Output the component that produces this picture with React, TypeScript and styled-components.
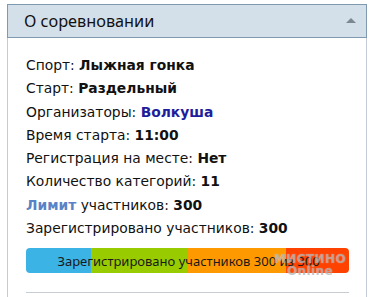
import React from "react";
import styled, { createGlobalStyle } from "styled-components";

const Global = createGlobalStyle`
  html, body { margin: 0; padding: 0; background: #ffffff; }
  body { font-family: "DejaVu Sans", Verdana, sans-serif; }
`;

const Panel = styled.section`
  margin: 4px 0 0 7px;
  width: 360px;
  box-sizing: border-box;
  border-left: 1px solid #c3ccd6;
  border-right: 1px solid #c3ccd6;
  height: 293px;
`;

const Header = styled.div`
  display: flex;
  align-items: center;
  justify-content: space-between;
  box-sizing: border-box;
  height: 34px;
  margin: 0 -1px;
  padding: 0 10px 0 16px;
  background: #d3e0ea;
  border: 1px solid #7f9ab0;
  font-family: "Noto Sans", "Open Sans", sans-serif;
  font-size: 16.3px;
  color: #111;
`;

const Arrow = styled.span`
  width: 0;
  height: 0;
  border-left: 5px solid transparent;
  border-right: 5px solid transparent;
  border-bottom: 5px solid #7d8790;
  margin-top: -1px;
`;

const Body = styled.div`
  padding: 16px 17px 0 18px;
  display: flex;
  flex-direction: column;
`;

const Row = styled.div`
  font-size: 13.85px;
  line-height: 23.3px;
  color: #111;
  white-space: nowrap;
`;

const Value = styled.b<{ $color?: string }>`
  font-weight: bold;
  color: ${(p) => p.$color || "#111"};
`;

const BarWrap = styled.div`
  position: relative;
  margin-top: 8px;
  height: 25px;
`;

const Track = styled.div`
  display: flex;
  height: 100%;
  border-radius: 4px;
  overflow: hidden;
`;

const Segment = styled.div<{ $bg: string }>`
  background: ${(p) => p.$bg};
  height: 100%;
`;

const BarLabel = styled.div`
  position: absolute;
  inset: 0;
  display: flex;
  align-items: center;
  justify-content: center;
  font-family: "Noto Sans", "Open Sans", sans-serif;
  font-size: 13px;
  color: #1a1a1a;
  padding-left: 2px;
`;

const Watermark = styled.div`
  position: absolute;
  right: 3px;
  top: 5px;
  font-family: "DejaVu Sans", sans-serif;
  font-weight: bold;
  font-size: 12px;
  line-height: 12px;
  color: rgba(150, 150, 150, 0.55);
  text-shadow: 0 0 1px rgba(255, 255, 255, 0.6);
  text-align: center;
  letter-spacing: 0.4px;
  pointer-events: none;
`;

const Divider = styled.hr`
  margin: 19px 0 0;
  border: none;
  border-top: 1px solid #c5ccd4;
`;

const segments = [
  { w: 65, bg: "#3bb3e4" },
  { w: 97, bg: "#99cc00" },
  { w: 98, bg: "#ff9900" },
  { w: 63, bg: "#ff4200" },
];

export default function App() {
  return (
    <>
      <Global />
      <Panel>
        <Header>
          <span>О соревновании</span>
          <Arrow />
        </Header>
        <Body>
          <Row>Спорт: <Value>Лыжная гонка</Value></Row>
          <Row>Старт: <Value>Раздельный</Value></Row>
          <Row>Организаторы: <Value $color="#1e1e9c">Волкуша</Value></Row>
          <Row>Время старта: <Value>11:00</Value></Row>
          <Row>Регистрация на месте: <Value>Нет</Value></Row>
          <Row>Количество категорий: <Value>11</Value></Row>
          <Row><Value $color="#5a82c6">Лимит</Value> участников: <Value>300</Value></Row>
          <Row>Зарегистрировано участников: <Value>300</Value></Row>
          <BarWrap>
            <Track>
              {segments.map((s, i) => (
                <Segment key={i} $bg={s.bg} style={{ width: s.w }} />
              ))}
            </Track>
            <BarLabel>Зарегистрировано участников 300 из 300</BarLabel>
            <Watermark>МИСТИНО<br />Online</Watermark>
          </BarWrap>
          <Divider />
        </Body>
      </Panel>
    </>
  );
}
